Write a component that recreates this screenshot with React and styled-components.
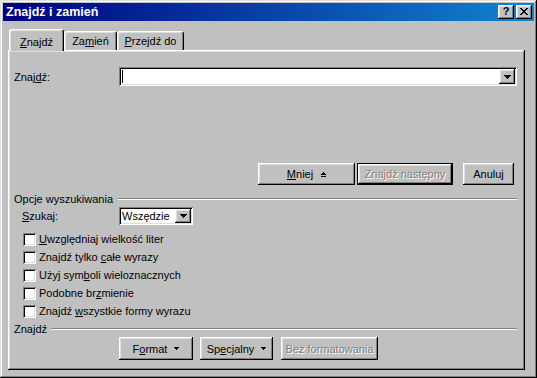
import React from "react";
import styled, { createGlobalStyle } from "styled-components";

const GlobalStyle = createGlobalStyle`
  html, body {
    margin: 0;
    padding: 0;
    background: #c0c0c0;
  }
  body {
    font-family: "Liberation Sans", Arial, sans-serif;
    font-size: 11px;
    color: #000;
  }
  * {
    box-sizing: border-box;
  }
`;

const raised = `
  box-shadow: inset -1px -1px #000, inset 1px 1px #fff,
    inset -2px -2px #808080, inset 2px 2px #dfdfdf;
`;

const sunken = `
  box-shadow: inset 1px 1px #808080, inset -1px -1px #fff,
    inset 2px 2px #000, inset -2px -2px #dfdfdf;
`;

const Window = styled.div`
  width: 537px;
  height: 378px;
  padding: 3px;
  display: flex;
  flex-direction: column;
  background: #c0c0c0;
  box-shadow: inset -1px -1px #000, inset 1px 1px #dfdfdf,
    inset -2px -2px #808080, inset 2px 2px #fff;
`;

const TitleBar = styled.div`
  height: 18px;
  display: flex;
  align-items: center;
  padding: 0 2px;
  background: linear-gradient(to right, #000080, #1084d0);
  color: #fff;
  font-weight: bold;
  font-size: 12.5px;
`;

const Title = styled.span`
  flex: 1;
  padding-left: 1px;
`;

const TitleButton = styled.div`
  width: 16px;
  height: 14px;
  margin-left: ${(p) => p.$gap || 0}px;
  background: #c0c0c0;
  ${raised}
  display: flex;
  align-items: center;
  justify-content: center;
  color: #000;
  font-size: 11px;
  font-weight: bold;
  line-height: 1;
  padding-bottom: 1px;
`;

const Body = styled.div`
  flex: 1;
  display: flex;
  flex-direction: column;
  padding: 8px 9px 5px 5px;
`;

const TabStrip = styled.div`
  display: flex;
  align-items: flex-end;
  height: 21px;
  padding-left: 1px;
`;

const Tab = styled.div`
  position: relative;
  z-index: ${(p) => (p.$active ? 2 : 1)};
  width: ${(p) => p.$w}px;
  height: ${(p) => (p.$active ? 22 : 19)}px;
  margin-bottom: ${(p) => (p.$active ? -1 : 0)}px;
  padding-top: ${(p) => (p.$active ? 2 : 0)}px;
  display: flex;
  align-items: center;
  justify-content: center;
  background: #c0c0c0;
  border-top: 1px solid #fff;
  border-left: 1px solid #fff;
  border-right: 1px solid #000;
  border-radius: 3px 3px 0 0;
  box-shadow: inset -1px 0 #808080, inset 1px 1px #dfdfdf;
`;

const Panel = styled.div`
  flex: 1;
  display: flex;
  flex-direction: column;
  padding: 17px 8px 0 6px;
  background: #c0c0c0;
  ${raised}
`;

const FieldRow = styled.div`
  display: flex;
  align-items: center;
  height: ${(p) => p.$h}px;
  margin-top: ${(p) => p.$mt || 0}px;
  padding-left: ${(p) => p.$pl || 0}px;
`;

const Label = styled.span`
  width: ${(p) => p.$w}px;
  flex-shrink: 0;
`;

const Combo = styled.div`
  flex: ${(p) => (p.$w ? "none" : 1)};
  width: ${(p) => (p.$w ? `${p.$w}px` : "auto")};
  height: 100%;
  display: flex;
  align-items: stretch;
  padding: 2px;
  background: #fff;
  ${sunken}
`;

const ComboText = styled.span`
  flex: 1;
  display: flex;
  align-items: center;
  padding-left: 1px;
`;

const Caret = styled.span`
  width: 1px;
  height: 13px;
  background: #000;
`;

const DropButton = styled.div`
  width: 16px;
  display: flex;
  align-items: center;
  justify-content: center;
  background: #c0c0c0;
  ${raised}
`;

const ButtonRow = styled.div`
  display: flex;
  justify-content: ${(p) => (p.$end ? "flex-end" : "flex-start")};
  margin-top: ${(p) => p.$mt || 0}px;
  padding-left: ${(p) => p.$pl || 0}px;
  padding-right: ${(p) => p.$pr || 0}px;
`;

const Button = styled.button`
  width: ${(p) => p.$w}px;
  height: ${(p) => p.$h}px;
  margin-left: ${(p) => p.$ml || 0}px;
  padding: 0;
  display: flex;
  align-items: center;
  justify-content: center;
  gap: ${(p) => p.$gap || 0}px;
  font: inherit;
  background: #c0c0c0;
  border: ${(p) => (p.$default ? "1px solid #000" : "none")};
  ${raised}
  color: ${(p) => (p.$off ? "#808080" : "#000")};
  text-shadow: ${(p) => (p.$off ? "1px 1px #fff" : "none")};
`;

const Section = styled.div`
  display: flex;
  align-items: center;
  height: 13px;
  margin-top: ${(p) => p.$mt}px;
`;

const Etched = styled.div`
  flex: 1;
  height: 2px;
  margin-left: ${(p) => p.$gap}px;
  border-top: 1px solid #808080;
  border-bottom: 1px solid #fff;
`;

const CheckList = styled.div`
  display: flex;
  flex-direction: column;
  margin-top: 5px;
  padding-left: 9px;
`;

const CheckRow = styled.div`
  display: flex;
  align-items: center;
  gap: 3px;
  height: 18px;
`;

const Box = styled.span`
  width: 13px;
  height: 13px;
  background: #fff;
  ${sunken}
`;

const U = styled.span`
  text-decoration: underline;
  text-underline-offset: 1px;
`;

const Pixels = ({ rows, color = "#000" }) => (
  <svg
    width={rows[0].length}
    height={rows.length}
    shapeRendering="crispEdges"
    style={{ display: "block" }}
  >
    {rows.flatMap((r, y) =>
      [...r].map((c, x) =>
        c === "x" ? (
          <rect key={`${x}-${y}`} x={x} y={y} width="1" height="1" fill={color} />
        ) : null
      )
    )}
  </svg>
);

const closeGlyph = [
  "xx....xx",
  ".xx..xx.",
  "..xxxx..",
  "...xx...",
  "..xxxx..",
  ".xx..xx.",
  "xx....xx",
];

const comboArrow = ["xxxxxxx", ".xxxxx.", "..xxx..", "...x..."];

const menuArrow = ["xxxxx", ".xxx.", "..x.."];

const lessArrow = ["..x..", ".xxx.", "xxxxx", ".....", "xxxxx"];

const options = [
  [<U key="u">U</U>, "względniaj wielkość liter"],
  ["Znajdź tylko ", <U key="u">c</U>, "ałe wyrazy"],
  ["Użyj sym", <U key="u">b</U>, "oli wieloznacznych"],
  ["Podobne br", <U key="u">z</U>, "mienie"],
  ["Znajdź ", <U key="u">w</U>, "szystkie formy wyrazu"],
];

export default function App() {
  return (
    <>
      <GlobalStyle />
      <Window>
        <TitleBar>
          <Title>Znajdź i zamień</Title>
          <TitleButton>?</TitleButton>
          <TitleButton $gap={2}>
            <Pixels rows={closeGlyph} />
          </TitleButton>
        </TitleBar>
        <Body>
          <TabStrip>
            <Tab $active $w={55}>
              <span>
                <U>Z</U>najdź
              </span>
            </Tab>
            <Tab $w={53}>
              <span>
                Za<U>m</U>ień
              </span>
            </Tab>
            <Tab $w={67}>
              <span>
                <U>P</U>rzejdź do
              </span>
            </Tab>
          </TabStrip>
          <Panel>
            <FieldRow $h={19}>
              <Label $w={105}>
                Znaj<U>d</U>ź:
              </Label>
              <Combo>
                <ComboText>
                  <Caret />
                </ComboText>
                <DropButton>
                  <Pixels rows={comboArrow} />
                </DropButton>
              </Combo>
            </FieldRow>

            <ButtonRow $end $mt={77} $pr={3}>
              <Button $w={97} $h={22} $gap={8}>
                <span>
                  <U>M</U>niej
                </span>
                <Pixels rows={lessArrow} />
              </Button>
              <Button $w={96} $h={22} $ml={2} $default $off>
                Znajdź następny
              </Button>
              <Button $w={51} $h={22} $ml={10}>
                Anuluj
              </Button>
            </ButtonRow>

            <Section $mt={7}>
              <span>Opcje wyszukiwania</span>
              <Etched $gap={5} />
            </Section>

            <FieldRow $h={18} $mt={2} $pl={8}>
              <Label $w={97}>
                <U>S</U>zukaj:
              </Label>
              <Combo $w={74}>
                <ComboText>Wszędzie</ComboText>
                <DropButton>
                  <Pixels rows={comboArrow} />
                </DropButton>
              </Combo>
            </FieldRow>

            <CheckList>
              {options.map((label, i) => (
                <CheckRow key={i}>
                  <Box />
                  <span>{label}</span>
                </CheckRow>
              ))}
            </CheckList>

            <Section $mt={2}>
              <span>Znajdź</span>
              <Etched $gap={4} />
            </Section>

            <ButtonRow $mt={2} $pl={105}>
              <Button $w={74} $h={23} $gap={7}>
                <span>
                  F<U>o</U>rmat
                </span>
                <Pixels rows={menuArrow} />
              </Button>
              <Button $w={73} $h={23} $ml={7} $gap={7}>
                <span>
                  Sp<U>e</U>cjalny
                </span>
                <Pixels rows={menuArrow} />
              </Button>
              <Button $w={97} $h={23} $ml={8} $off>
                Bez formatowania
              </Button>
            </ButtonRow>
          </Panel>
        </Body>
      </Window>
    </>
  );
}
